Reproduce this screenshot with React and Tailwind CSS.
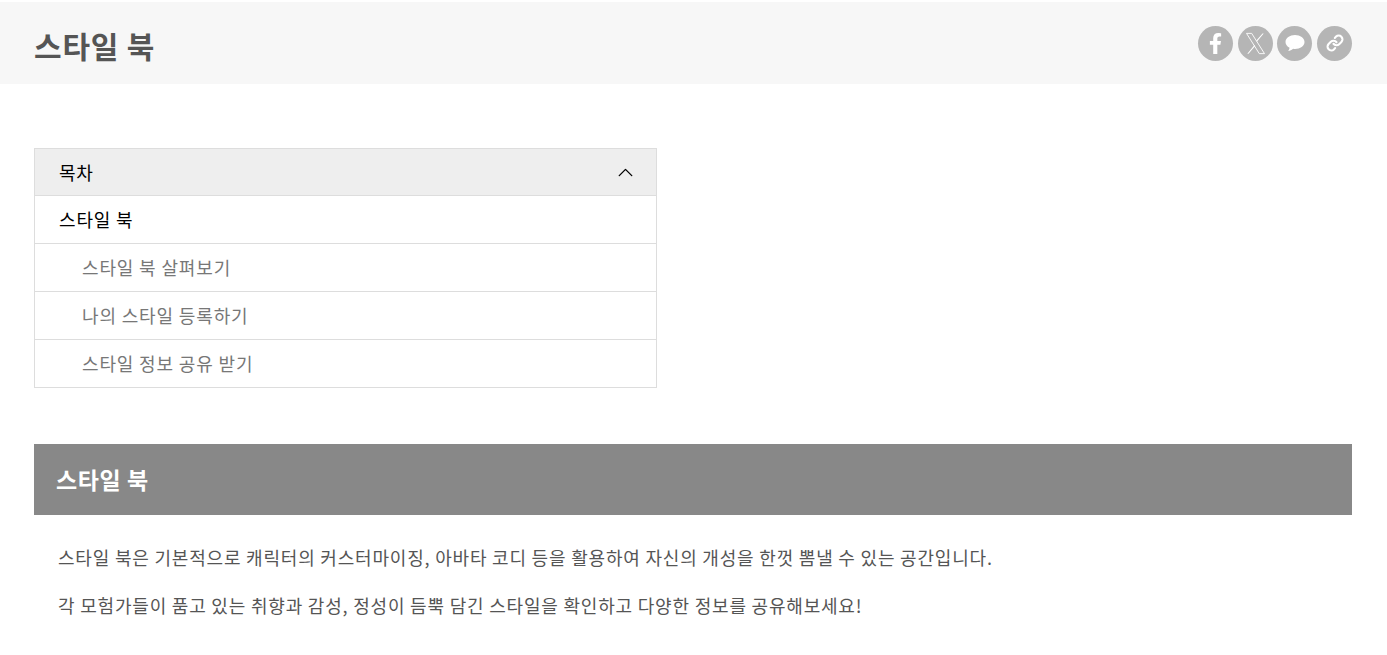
import React from 'react';
import { ChevronUp, Link } from 'lucide-react';
import { FaFacebookF } from 'react-icons/fa';

const font = "font-['Noto_Sans_CJK_KR','Noto_Sans',sans-serif]";

const ShareButton = ({ children }) => (
  <div className="flex h-[35px] w-[35px] items-center justify-center rounded-full bg-[#b5b5b5] text-white">
    {children}
  </div>
);

const TocRow = ({ label, sub }) => (
  <div className={`flex h-12 items-center border-b border-[#dddddd] text-[18px] tracking-[0.85px] last:h-[47px] last:border-b-0 ${sub ? 'pl-[47px] text-[#777777]' : 'pl-6 text-black'}`}>
    {label}
  </div>
);

export default function App() {
  return (
    <div className={`${font} min-h-[655px] bg-white pt-0.5 pb-[20px]`}>
      {/* Header */}
      <div className="flex h-[82px] items-center justify-between bg-[#f7f7f7] pl-[34px] pr-[35px]">
        <h1 className="pt-1 text-[30px] font-bold tracking-[0.8px] text-[#555555]">스타일 북</h1>
        <div className="flex items-center gap-[4.67px]">
          <ShareButton><FaFacebookF size={21} /></ShareButton>
          <ShareButton>
            <svg width="27" height="27" viewBox="0 0 24 24" fill="none" stroke="currentColor" strokeWidth="0.8" strokeLinejoin="miter">
              <path d="M4 3h4.600l11.400 18h-4.600z" />
              <path d="M19.300 3h-1.100l-5.600 6.500.6.900zM4.700 21h1.100l5.900-6.800-.6-.9z" fill="currentColor" stroke="none" />
            </svg>
          </ShareButton>
          <ShareButton>
            <svg width="22" height="20" viewBox="0 0 22 20" fill="currentColor">
              <path d="M11 2C5.800 2 1.500 5.100 1.500 9c0 2.400 1.600 4.500 4.100 5.800-.2 1-.8 2.500-1.400 3.200 1.700-.2 3.700-1.200 5-2.200.6.100 1.200.2 1.800.2 5.200 0 9.500-3.100 9.500-7S16.200 2 11 2z" />
            </svg>
          </ShareButton>
          <ShareButton><Link size={18} strokeWidth={2.8} /></ShareButton>
        </div>
      </div>

      <div className="pl-[34px] pr-[35px]">
        {/* Table of contents */}
        <div className="mt-16 w-[623px] border border-[#dddddd]">
          <div className="flex h-[47px] items-center justify-between border-b border-[#dddddd] bg-[#eeeeee] pl-6 pr-[18px] text-[18px] tracking-[0.8px] text-black">
            <span>목차</span>
            <ChevronUp size={25} strokeWidth={1.3} />
          </div>
          <TocRow label="스타일 북" />
          <TocRow label="스타일 북 살펴보기" sub />
          <TocRow label="나의 스타일 등록하기" sub />
          <TocRow label="스타일 정보 공유 받기" sub />
        </div>

        {/* Section */}
        <h2 className="mt-14 flex h-[71px] items-center bg-[#888888] pl-[22px] text-[23px] font-bold tracking-[0.6px] text-white">스타일 북</h2>
        <div className="px-6 pt-[30px] text-[18px] leading-[24px] tracking-[0.8px] text-[#555555]">
          <p>스타일 북은 기본적으로 캐릭터의 커스터마이징, 아바타 코디 등을 활용하여 자신의 개성을 한껏 뽐낼 수 있는 공간입니다.</p>
          <p className="mt-6">각 모험가들이 품고 있는 취향과 감성, 정성이 듬뿍 담긴 스타일을 확인하고 다양한 정보를 공유해보세요!</p>
        </div>
      </div>
    </div>
  );
}
